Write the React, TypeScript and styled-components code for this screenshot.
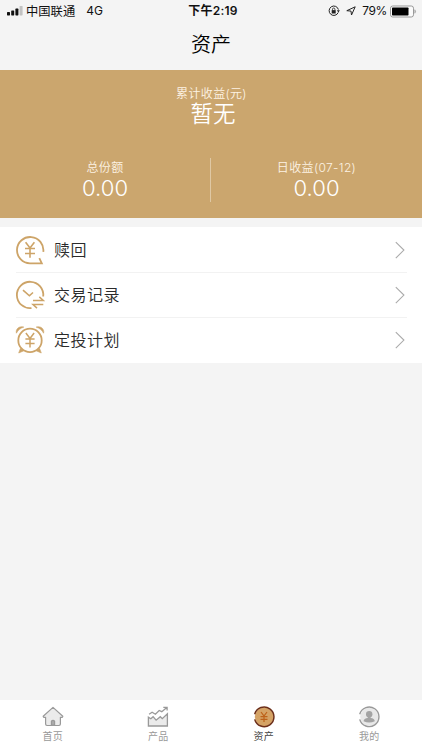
import React from "react";
import styled, { createGlobalStyle } from "styled-components";

const GlobalStyle = createGlobalStyle`
  * { box-sizing: border-box; }
  body { margin: 0; background: #f4f4f4; }
`;

const Screen = styled.div`
  width: 422px;
  height: 750px;
  display: flex;
  flex-direction: column;
  overflow: hidden;
  background: #f4f4f4;
  color: #333;
  font-family: Inter, "Noto Sans CJK SC", sans-serif;
`;

const StatusBar = styled.div`
  height: 22px;
  display: grid;
  grid-template-columns: 1fr auto 1fr;
  align-items: center;
  padding: 0 5px 0 7px;
  color: #111;
  font-size: 12px;
  line-height: 22px;
`;

const StatusGroup = styled.div<{ $end?: boolean }>`
  display: flex;
  align-items: center;
  justify-content: ${(p) => (p.$end ? "flex-end" : "flex-start")};
  height: 22px;
`;

const Carrier = styled.span`
  margin: 0 11px 0 3px;
  padding-top: 1px;
  font-size: 12.3px;
`;

const Clock = styled.div`
  padding-left: 2px;
  font-weight: 600;
  font-size: 12px;
  letter-spacing: 0.25px;
`;

const Percent = styled.span`
  margin: 0 3px 0 6px;
  font-size: 12px;
  letter-spacing: -0.4px;
`;

const Header = styled.h1`
  height: 48px;
  margin: 0;
  text-align: center;
  font-size: 20px;
  font-weight: 350;
  line-height: 46px;
  color: #000;
`;

const Summary = styled.section`
  height: 147.5px;
  display: flex;
  flex-direction: column;
  background: #cba66e;
  color: #fff;
  text-align: center;
`;

const Caption = styled.div`
  height: 18px;
  font-size: 12px;
  font-weight: 350;
  line-height: 20px;
  letter-spacing: 0.35px;
  color: #fdf3e4;
`;

const Total = styled.div`
  padding: 14px 0 0 1px;
  height: 88px;
`;

const TotalValue = styled.div`
  padding-left: 3px;
  font-size: 22.5px;
  font-weight: 350;
  line-height: 24px;
`;

const Stats = styled.div`
  display: grid;
  grid-template-columns: 210px 1px 211px;
`;

const Stat = styled.div`
  height: 44px;
`;

const StatValue = styled.div`
  font-size: 22.1px;
  font-weight: 350;
  line-height: 24px;
`;

const Separator = styled.div`
  height: 44px;
  background: #dfc8a4;
`;

const Menu = styled.nav`
  margin-top: 9.5px;
  padding: 0 15px 0 16px;
  background: #fff;
`;

const MenuRow = styled.div`
  height: 45px;
  display: flex;
  align-items: center;
  & + & { border-top: 1px solid #f2f2f2; }
  &:last-child { height: 46px; padding-bottom: 2px; }
`;

const MenuLabel = styled.span`
  flex: 1;
  padding-left: 9px;
  font-size: 16px;
  font-weight: 350;
  line-height: 24px;
  letter-spacing: 0.5px;
  color: #2b2b2b;
`;

const MenuIcon = styled.svg`
  width: 30px;
  height: 30px;
  margin-left: -1px;
  fill: none;
  stroke: #cda468;
  stroke-width: 1.8;
`;

const TabBar = styled.footer`
  height: 50px;
  margin-top: auto;
  display: grid;
  grid-template-columns: repeat(4, 1fr);
  background: #fff;
`;

const Tab = styled.div<{ $active?: boolean }>`
  display: flex;
  flex-direction: column;
  align-items: center;
  padding-top: 6px;
  font-size: 10px;
  line-height: 16px;
  letter-spacing: 0.2px;
  color: ${(p) => (p.$active ? "#444" : "#999")};
`;

const TabIcon = styled.svg`
  width: 22px;
  height: 22px;
  fill: none;
`;

const Signal = () => (
  <svg width="16" height="10" viewBox="0 0 16 10" fill="#111">
    <rect x="0" y="6" width="3" height="3.4" rx=".6" />
    <rect x="4.2" y="4.4" width="3" height="5" rx=".6" />
    <rect x="8.4" y="2.6" width="3" height="6.8" rx=".6" />
    <rect x="12.6" y="0" width="3" height="9.4" rx=".6" fill="#c2c2c2" />
  </svg>
);

const RotationLock = () => (
  <svg width="12" height="12" viewBox="0 0 12 12" fill="none" stroke="#222">
    <path d="M10.2 7.5A4.7 4.7 0 1 1 10.4 4.6" />
    <path d="M8.9 5.3h3L10.4 7.4z" fill="#222" stroke="none" />
    <rect x="3.7" y="5.1" width="4" height="3.4" fill="#222" stroke="none" />
    <path d="M4.5 5.2V4.2a1.2 1.2 0 0 1 2.4 0v1" strokeWidth=".8" />
  </svg>
);

const ArrowSvg = styled.svg`
  margin-left: 6px;
`;

const LocationArrow = () => (
  <ArrowSvg width="10" height="10" viewBox="0 0 10 10" fill="none" stroke="#222" strokeLinejoin="round">
    <path d="M9.2.8 5.5 9 5 5.1.8 4.7z" />
  </ArrowSvg>
);

const Battery = () => (
  <svg width="27" height="13" viewBox="0 0 27 13">
    <rect x=".5" y="1" width="23" height="11" rx="2.2" fill="#fafafa" stroke="#999" />
    <rect x="2" y="2.5" width="16.5" height="8" rx=".7" fill="#000" />
    <path d="M24.8 4.7q1.6 1.8 0 3.6z" fill="#999" stroke="#999" strokeWidth=".5" />
  </svg>
);

const ChevronSvg = styled.svg`
  margin-right: 1px;
`;

const Chevron = () => (
  <ChevronSvg width="12" height="18" viewBox="0 0 12 18" fill="none" stroke="#aaa" strokeWidth="1.1">
    <path d="M1.8 1.1 9.9 9.1 1.8 17.1" />
  </ChevronSvg>
);

const RedeemIcon = () => (
  <MenuIcon viewBox="0 0 30 30">
    <path d="M28.3 16.8A13.2 13.2 0 1 0 15 28.4h11.8l-2.5-5.2" />
    <path d="m10.6 7.2 4.4 5.8 4.4-5.8M15 13v9.8M10 13.5h10M10 18.5h10" strokeWidth="1.6" />
  </MenuIcon>
);

const RecordsIcon = () => (
  <MenuIcon viewBox="0 0 30 30">
    <path d="M28.2 16.5A13.2 13.2 0 1 0 16.5 28.1" />
    <path d="m8 10.2 6.4 5.6 3.6-3.3" strokeWidth="1.6" />
    <path d="M18 20.5h10.3l-4-3.6M28.3 24.5H18l4 3.6" strokeWidth="1.5" />
  </MenuIcon>
);

const PlanIcon = () => (
  <MenuIcon viewBox="0 0 30 30">
    <circle cx="15" cy="15.4" r="11.7" />
    <path d="M1.4 8.2C.4 4.2 4 .6 8.8 2.1 5.5 3.1 3 5.2 1.4 8.2zM28.6 8.2c1-4-2.6-7.6-7.4-6.1 3.3 1 5.8 3.1 7.4 6.1zM5.4 23.4 3.7 28l5.3-2.3zM24.6 23.4l1.7 4.6-5.3-2.3z" fill="#cda468" strokeWidth=".6" />
    <path d="m10.9 8 4.1 5.5L19.1 8M15 13.5v9M10.4 14h9.2M10.4 18.5h9.2" strokeWidth="1.5" />
  </MenuIcon>
);

const HomeIcon = () => (
  <TabIcon viewBox="0 0 22 22" stroke="#999" strokeWidth="1.2" strokeLinejoin="round">
    <path d="M11 1.4 1.2 10.3q.4 1.6 2.4 1v6.8q0 1.4 1.4 1.4h12q1.4 0 1.4-1.4v-6.8q2 .6 2.4-1z" fill="#ebebeb" />
    <path d="M9.4 19.2v-4q1.6-1.8 3.2 0v4z" fill="#aaa" />
  </TabIcon>
);

const ProductsIcon = () => (
  <TabIcon viewBox="0 0 22 22" stroke="#999" strokeWidth="1.3">
    <path d="M1.4 11.2v8.8h19V7.7l-5.1 5-2-2-4.2 3.5-3-3.5-2.3 2z" fill="#ebebeb" />
    <path d="m2.1 8.3 3-2 3.3 2 3.8-3.8 2.6 1.2 5-4.1M16.3 1.3h3.8v3.2" />
  </TabIcon>
);

const AssetsIcon = () => (
  <TabIcon viewBox="0 0 22 22">
    <circle cx="11.2" cy="10.8" r="9.4" fill="#d5a365" />
    <path d="M1.7 8.2A9.8 9.8 0 1 1 1.7 13.4" stroke="#6c2e18" strokeWidth="1.5" />
    <path d="m8 6 3 4 3-4M11 10v6M7.5 10.7h7M7.5 13.3h7" stroke="#bd6219" strokeWidth="1.2" />
  </TabIcon>
);

const ProfileIcon = () => (
  <TabIcon viewBox="0 0 22 22">
    <circle cx="11.2" cy="10.8" r="9" fill="#e8e8e8" />
    <path d="M1.7 8.2A9.8 9.8 0 1 1 1.7 13.4" stroke="#999" strokeWidth="1.4" />
    <circle cx="11.2" cy="8.3" r="3.2" fill="#a3a3a3" />
    <path d="M9.8 10.5h2.8v1.5c2.4.3 4.2 1.4 4.2 3.2q-5.6 2.8-11.2 0c0-1.8 1.8-2.9 4.2-3.2z" fill="#a3a3a3" />
  </TabIcon>
);

const menuItems = [
  { label: "赎回", Icon: RedeemIcon },
  { label: "交易记录", Icon: RecordsIcon },
  { label: "定投计划", Icon: PlanIcon },
];

const tabs = [
  { label: "首页", Icon: HomeIcon },
  { label: "产品", Icon: ProductsIcon },
  { label: "资产", Icon: AssetsIcon, active: true },
  { label: "我的", Icon: ProfileIcon },
];

export default function App() {
  return (
    <>
      <GlobalStyle />
      <Screen>
        <StatusBar>
          <StatusGroup>
            <Signal />
            <Carrier>中国联通</Carrier>
            <span>4G</span>
          </StatusGroup>
          <Clock>下午2:19</Clock>
          <StatusGroup $end>
            <RotationLock />
            <LocationArrow />
            <Percent>79%</Percent>
            <Battery />
          </StatusGroup>
        </StatusBar>
        <Header>资产</Header>
        <Summary>
          <Total>
            <Caption>累计收益(元)</Caption>
            <TotalValue>暂无</TotalValue>
          </Total>
          <Stats>
            <Stat>
              <Caption>总份额</Caption>
              <StatValue>0.00</StatValue>
            </Stat>
            <Separator />
            <Stat>
              <Caption>日收益(07-12)</Caption>
              <StatValue>0.00</StatValue>
            </Stat>
          </Stats>
        </Summary>
        <Menu>
          {menuItems.map(({ label, Icon }) => (
            <MenuRow key={label}>
              <Icon />
              <MenuLabel>{label}</MenuLabel>
              <Chevron />
            </MenuRow>
          ))}
        </Menu>
        <TabBar>
          {tabs.map(({ label, Icon, active }) => (
            <Tab key={label} $active={active}>
              <Icon />
              {label}
            </Tab>
          ))}
        </TabBar>
      </Screen>
    </>
  );
}
